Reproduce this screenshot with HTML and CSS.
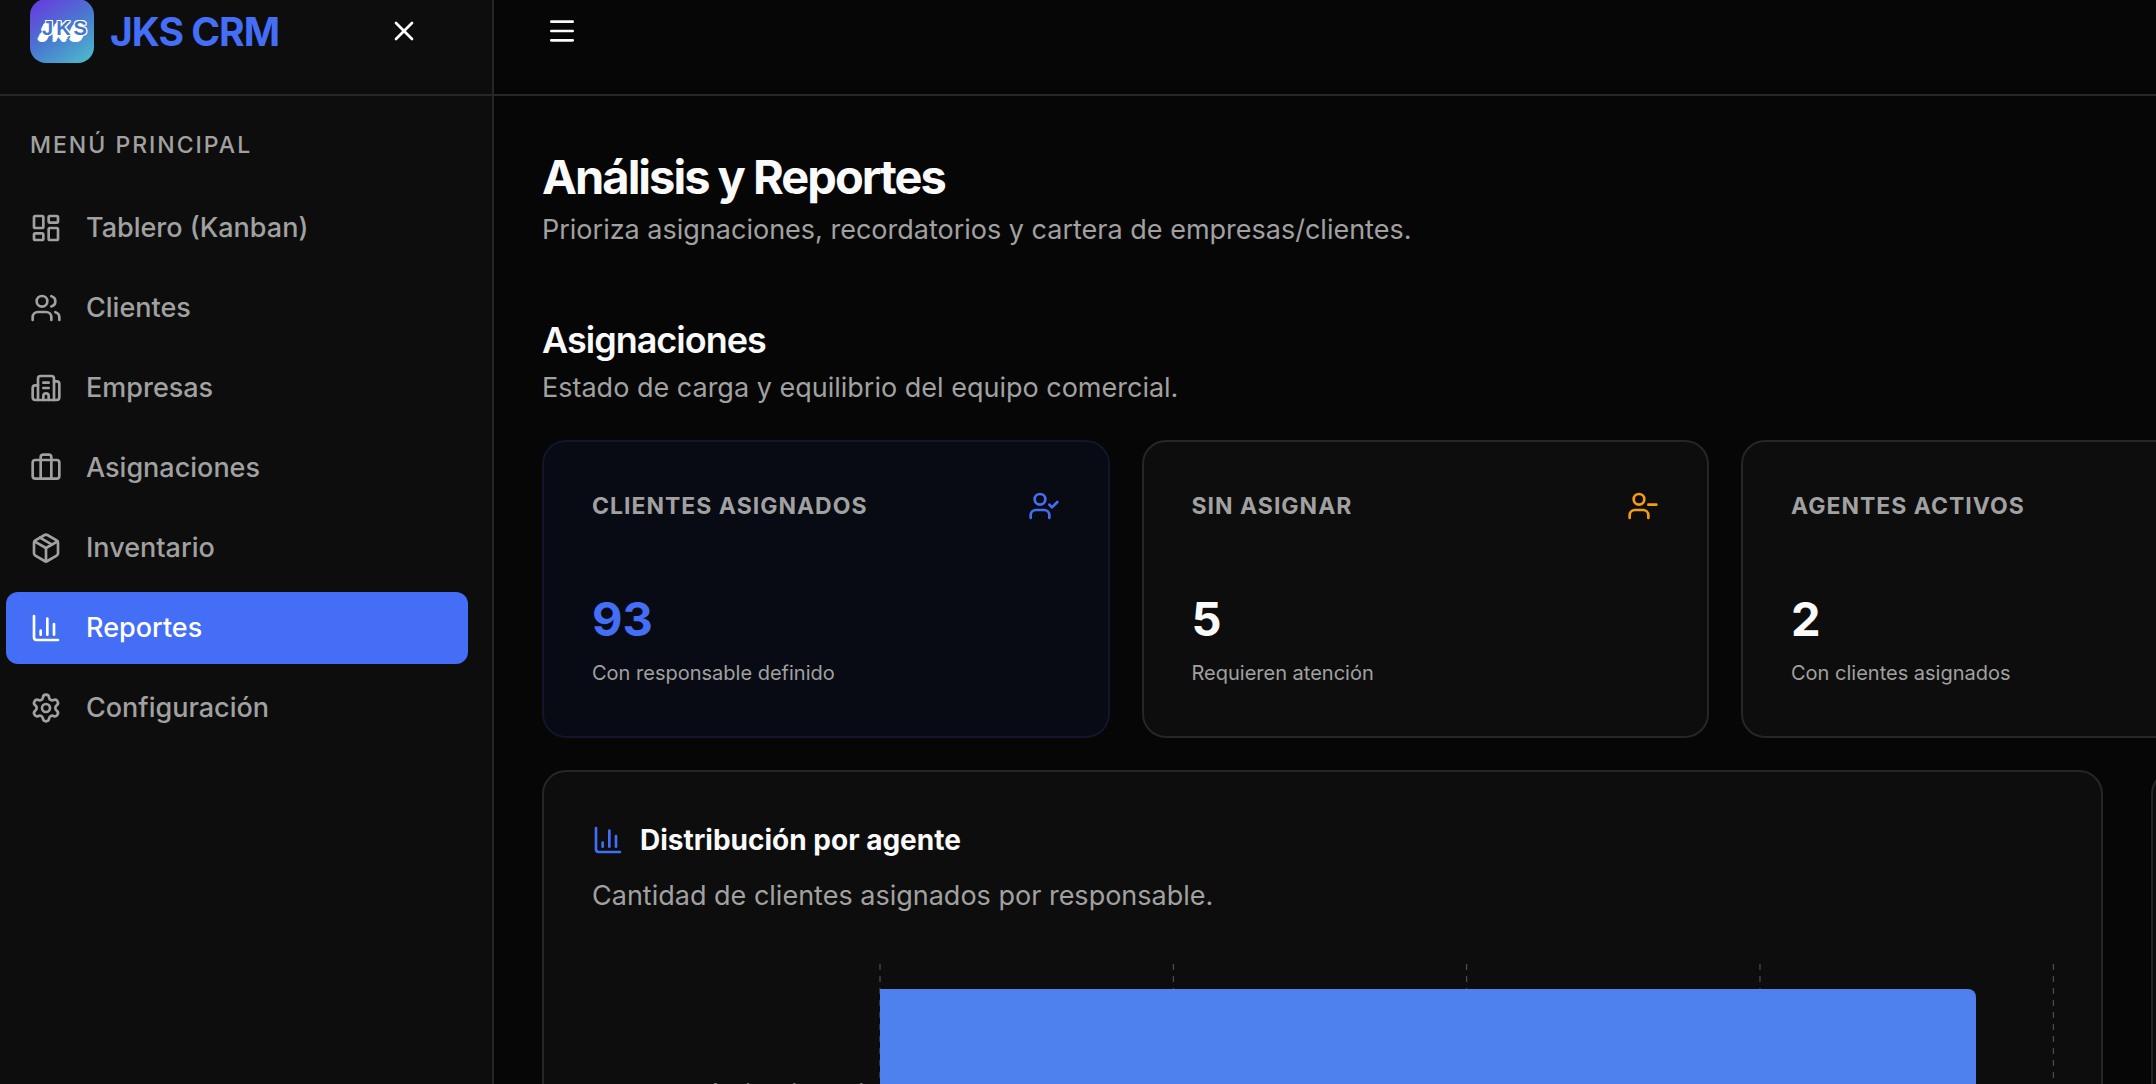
FILE: index.html
```html
<!DOCTYPE html>
<html lang="es">
<head>
    <meta charset="UTF-8">
    <meta name="viewport" content="width=device-width, initial-scale=1.0">
    <title>JKS CRM</title>
    <link rel="stylesheet" href="styles.css">
</head>
<body>
    <aside class="sidebar">
        <div class="sidebar-header">
            <span class="logo">JKS</span>
            <span class="brand">JKS CRM</span>
            <button class="icon-button close-button" type="button" aria-label="Cerrar menú">
                <svg class="icon" viewBox="0 0 24 24"><path d="M18 6 6 18"/><path d="m6 6 12 12"/></svg>
            </button>
        </div>

        <nav class="menu">
            <h2 class="menu-title">Menú principal</h2>
            <a class="menu-item" href="#tablero">
                <svg class="icon" viewBox="0 0 24 24"><rect width="7" height="9" x="3" y="3" rx="1"/><rect width="7" height="5" x="14" y="3" rx="1"/><rect width="7" height="9" x="14" y="12" rx="1"/><rect width="7" height="5" x="3" y="16" rx="1"/></svg>
                Tablero (Kanban)
            </a>
            <a class="menu-item" href="#clientes">
                <svg class="icon" viewBox="0 0 24 24"><path d="M16 21v-2a4 4 0 0 0-4-4H6a4 4 0 0 0-4 4v2"/><path d="M16 3.128a4 4 0 0 1 0 7.744"/><path d="M22 21v-2a4 4 0 0 0-3-3.87"/><circle cx="9" cy="7" r="4"/></svg>
                Clientes
            </a>
            <a class="menu-item" href="#empresas">
                <svg class="icon" viewBox="0 0 24 24"><path d="M10 12h4"/><path d="M10 8h4"/><path d="M14 21v-3a2 2 0 0 0-4 0v3"/><path d="M6 10H4a2 2 0 0 0-2 2v7a2 2 0 0 0 2 2h16a2 2 0 0 0 2-2V9a2 2 0 0 0-2-2h-2"/><path d="M6 21V5a2 2 0 0 1 2-2h8a2 2 0 0 1 2 2v16"/></svg>
                Empresas
            </a>
            <a class="menu-item" href="#asignaciones">
                <svg class="icon" viewBox="0 0 24 24"><path d="M16 20V4a2 2 0 0 0-2-2h-4a2 2 0 0 0-2 2v16"/><rect width="20" height="14" x="2" y="6" rx="2"/></svg>
                Asignaciones
            </a>
            <a class="menu-item" href="#inventario">
                <svg class="icon" viewBox="0 0 24 24"><path d="M11 21.73a2 2 0 0 0 2 0l7-4A2 2 0 0 0 21 16V8a2 2 0 0 0-1-1.73l-7-4a2 2 0 0 0-2 0l-7 4A2 2 0 0 0 3 8v8a2 2 0 0 0 1 1.73z"/><path d="M12 22V12"/><path d="M3.29 7 12 12l8.71-5"/><path d="m7.5 4.27 9 5.15"/></svg>
                Inventario
            </a>
            <a class="menu-item active" href="#reportes" aria-current="page">
                <svg class="icon" viewBox="0 0 24 24"><path d="M3 3v16a2 2 0 0 0 2 2h16"/><path d="M18 17V9"/><path d="M13 17V5"/><path d="M8 17v-3"/></svg>
                Reportes
            </a>
            <a class="menu-item" href="#configuracion">
                <svg class="icon" viewBox="0 0 24 24"><path d="M9.671 4.136a2.34 2.34 0 0 1 4.659 0 2.34 2.34 0 0 0 3.319 1.915 2.34 2.34 0 0 1 2.33 4.033 2.34 2.34 0 0 0 0 3.831 2.34 2.34 0 0 1-2.33 4.033 2.34 2.34 0 0 0-3.319 1.915 2.34 2.34 0 0 1-4.659 0 2.34 2.34 0 0 0-3.32-1.915 2.34 2.34 0 0 1-2.33-4.033 2.34 2.34 0 0 0 0-3.831A2.34 2.34 0 0 1 6.35 6.051a2.34 2.34 0 0 0 3.319-1.915"/><circle cx="12" cy="12" r="3"/></svg>
                Configuración
            </a>
        </nav>
    </aside>

    <div class="page">
        <header class="topbar">
            <button class="icon-button" type="button" aria-label="Abrir menú">
                <svg class="icon" viewBox="0 0 24 24"><path d="M4 5h16"/><path d="M4 12h16"/><path d="M4 19h16"/></svg>
            </button>
        </header>

        <main class="content">
            <h1 class="page-title">Análisis y Reportes</h1>
            <p class="text">Prioriza asignaciones, recordatorios y cartera de empresas/clientes.</p>

            <section class="section">
                <h2 class="section-title">Asignaciones</h2>
                <p class="text">Estado de carga y equilibrio del equipo comercial.</p>

                <div class="stats">
                    <article class="card highlight">
                        <div class="stat-header">
                            <h3 class="stat-label">Clientes asignados</h3>
                            <svg class="icon blue" viewBox="0 0 24 24"><path d="m16 11 2 2 4-4"/><path d="M16 21v-2a4 4 0 0 0-4-4H6a4 4 0 0 0-4 4v2"/><circle cx="9" cy="7" r="4"/></svg>
                        </div>
                        <p class="stat-value">93</p>
                        <p class="stat-note">Con responsable definido</p>
                    </article>
                    <article class="card">
                        <div class="stat-header">
                            <h3 class="stat-label">Sin asignar</h3>
                            <svg class="icon amber" viewBox="0 0 24 24"><path d="M16 21v-2a4 4 0 0 0-4-4H6a4 4 0 0 0-4 4v2"/><circle cx="9" cy="7" r="4"/><path d="M22 11h-6"/></svg>
                        </div>
                        <p class="stat-value">5</p>
                        <p class="stat-note">Requieren atención</p>
                    </article>
                    <article class="card">
                        <div class="stat-header">
                            <h3 class="stat-label">Agentes activos</h3>
                        </div>
                        <p class="stat-value">2</p>
                        <p class="stat-note">Con clientes asignados</p>
                    </article>
                </div>

                <div class="panels">
                    <article class="card panel-wide">
                        <h3 class="panel-title">
                            <svg class="icon blue" viewBox="0 0 24 24"><path d="M3 3v16a2 2 0 0 0 2 2h16"/><path d="M18 17V9"/><path d="M13 17V5"/><path d="M8 17v-3"/></svg>
                            Distribución por agente
                        </h3>
                        <p class="text">Cantidad de clientes asignados por responsable.</p>
                        <div class="chart">
                            <span class="chart-label">Andres Leonel</span>
                            <div class="plot">
                                <svg class="grid-lines" aria-hidden="true">
                                    <line x1="0" y1="0" x2="0" y2="100%"/>
                                    <line x1="25%" y1="0" x2="25%" y2="100%"/>
                                    <line x1="50%" y1="0" x2="50%" y2="100%"/>
                                    <line x1="75%" y1="0" x2="75%" y2="100%"/>
                                    <line x1="100%" y1="0" x2="100%" y2="100%"/>
                                </svg>
                                <div class="bar" style="width: 93.4%"></div>
                            </div>
                        </div>
                    </article>
                    <article class="card"></article>
                </div>
            </section>
        </main>
    </div>
</body>
</html>
```
FILE: styles.css
```css
* {
    box-sizing: border-box;
    margin: 0;
    padding: 0;
}
body {
    display: flex;
    height: 100vh;
    overflow: hidden;
    font-family: Inter, "Liberation Sans", sans-serif;
    font-size: 27px;
    line-height: 40px;
    background: #060606;
    color: #fafafa;
}
.icon {
    width: 32px;
    height: 32px;
    flex-shrink: 0;
    fill: none;
    stroke: currentColor;
    stroke-width: 2;
    stroke-linecap: round;
    stroke-linejoin: round;
}
.blue {
    color: #446ef6;
}
.amber {
    color: #f59e0b;
}
.icon-button {
    display: flex;
    padding: 16px;
    border: none;
    background: none;
    color: #fafafa;
    cursor: pointer;
}

/* sidebar */
.sidebar {
    width: 494px;
    flex-shrink: 0;
    background: #0d0d0d;
    border-right: 2px solid #262626;
}
.sidebar-header, .topbar {
    display: flex;
    align-items: center;
    height: 96px;
    padding-bottom: 32px;
    border-bottom: 2px solid #262626;
}
.sidebar-header {
    padding-left: 30px;
}
.logo {
    width: 64px;
    height: 64px;
    flex-shrink: 0;
    padding: 0 0 6px 8px;
    border-radius: 16px;
    background: linear-gradient(145deg, #6a35e0, #4a78d0 50%, #4cc0cc);
    font-family: "Liberation Sans", sans-serif;
    font-size: 20px;
    line-height: 58px;
    font-weight: bold;
    letter-spacing: 3px;
    text-align: center;
    color: #4577cf;
    text-shadow: 1px 0 #fff, 0 -1px #fff, 1px -1px #fff, -1px -1px #fff, -1px 1px #fff, 1px 1px #fff, -2px 2px #fff, -3px 3px #fff, -3px 4px #fff, -4px 5px #fff, -4px 6px #fff, -5px 7px #fff;
}
.brand {
    margin-left: 16px;
    font-size: 39px;
    line-height: 42px;
    font-weight: 700;
    letter-spacing: -1px;
    padding-top: 2px;
    color: #446ef6;
}
.close-button {
    margin-left: auto;
    margin-right: 56px;
}
.menu {
    display: flex;
    flex-direction: column;
    gap: 8px;
    padding: 33px 24px 0 6px;
}
.menu-title {
    padding: 0 24px;
    margin-bottom: 23px;
    font-size: 23px;
    line-height: 32px;
    font-weight: 500;
    letter-spacing: 2px;
    text-transform: uppercase;
    color: #a1a1a1;
}
.menu-item {
    display: flex;
    align-items: center;
    gap: 24px;
    height: 72px;
    padding: 0 24px;
    border-radius: 12px;
    font-weight: 500;
    color: #a1a1a1;
    text-decoration: none;
}
.menu-item.active {
    background: #446ef6;
    color: #fff;
}

/* main area */
.page {
    flex: 1;
    min-width: 0;
    overflow: hidden;
}
.topbar {
    padding-left: 36px;
}
.content {
    min-width: 2462px;
    padding: 48px;
}
.text {
    color: #a1a1a1;
}
.page-title {
    font-size: 47px;
    line-height: 66px;
    font-weight: 700;
    letter-spacing: -2px;
}
.section {
    margin-top: 62px;
}
.section-title {
    font-size: 36px;
    line-height: 56px;
    font-weight: 600;
    letter-spacing: -1px;
}
.card {
    padding: 48px;
    background: #0d0d0d;
    border: 2px solid #262626;
    border-radius: 24px;
}
.highlight {
    background: #080b13;
    border-color: #11162a;
}
.highlight .stat-value {
    color: #446ef6;
}
.stats {
    display: grid;
    grid-template-columns: repeat(4, 1fr);
    gap: 32px;
    margin-top: 32px;
}
.stat-header {
    display: flex;
    align-items: center;
    justify-content: space-between;
}
.stat-label {
    font-size: 23px;
    line-height: 32px;
    font-weight: 700;
    letter-spacing: 1px;
    text-transform: uppercase;
    color: #a1a1a1;
}
.stat-value {
    margin-top: 65px;
    font-size: 47px;
    line-height: 64px;
    font-weight: 700;
}
.stat-note {
    margin-top: 7px;
    font-size: 20px;
    line-height: 30px;
    color: #a1a1a1;
}
.panels {
    display: grid;
    grid-template-columns: repeat(3, 1fr);
    gap: 48px;
    margin-top: 32px;
}
.panel-wide {
    grid-column: span 2;
}
.panel-title {
    display: flex;
    align-items: center;
    gap: 16px;
    margin-bottom: 16px;
    font-size: 28px;
    line-height: 40px;
    font-weight: 700;
}

/* chart */
.chart {
    display: flex;
    gap: 16px;
    margin-top: 48px;
}
.chart-label {
    width: 272px;
    padding-top: 112px;
    font-size: 23px;
    line-height: 32px;
    text-align: right;
    color: #808080;
}
.plot {
    position: relative;
    flex: 1;
    height: 320px;
    padding-top: 25px;
}
.grid-lines {
    position: absolute;
    top: 0;
    left: 0;
    width: 100%;
    height: 100%;
    overflow: visible;
    stroke: #5c5c5c;
    stroke-dasharray: 6 6;
}
.bar {
    position: relative;
    height: 232px;
    background: #4e81ee;
    border-radius: 0 8px 8px 0;
}
```
